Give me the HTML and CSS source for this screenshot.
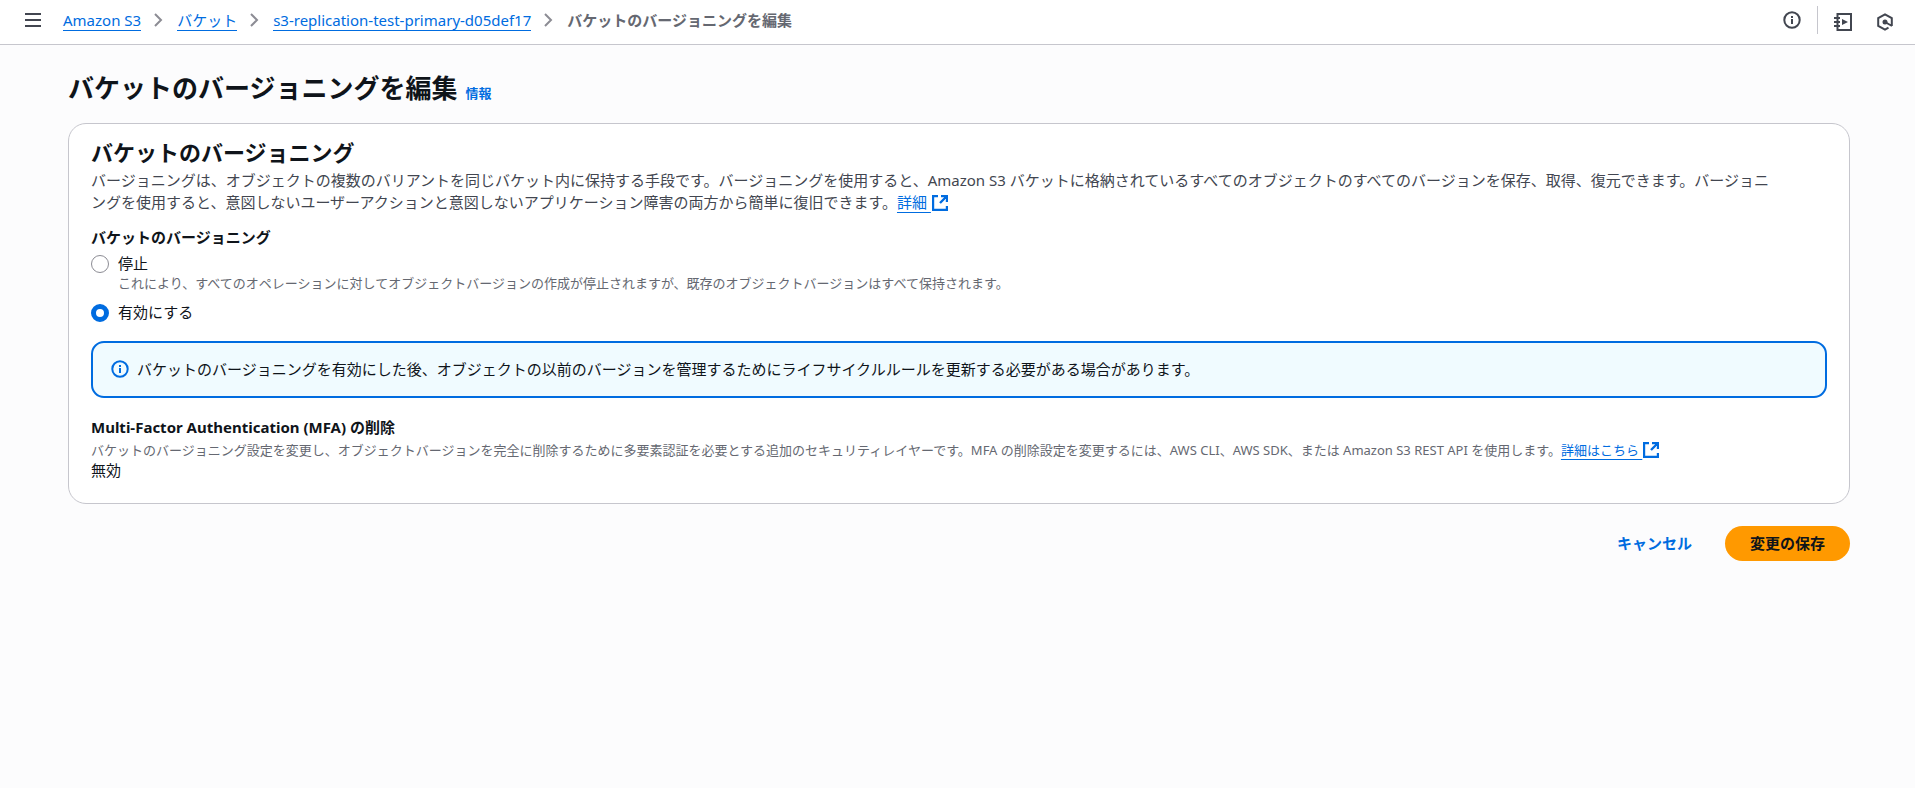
FILE: index.html
```
<!DOCTYPE html>
<html lang="ja">

<head>
  <meta charset="utf-8">
  <title>バケットのバージョニングを編集</title>
  <meta name="viewport" content="width=device-width, initial-scale=1">
  <link rel="stylesheet" href="styles.css">
</head>

<body>
  <header class="topbar">
    <button class="icon-button" aria-label="メニュー">
      <svg class="icon" viewBox="0 0 18 18"><path d="M1 3h16M1 9h16M1 15h16"/></svg>
    </button>
    <nav class="breadcrumbs">
      <a href="#">Amazon S3</a>
      <svg class="chevron" viewBox="0 0 10 16"><path d="M1 2l6 6-6 6"/></svg>
      <a href="#">バケット</a>
      <svg class="chevron" viewBox="0 0 10 16"><path d="M1 2l6 6-6 6"/></svg>
      <a href="#">s3-replication-test-primary-d05def17</a>
      <svg class="chevron" viewBox="0 0 10 16"><path d="M1 2l6 6-6 6"/></svg>
      <span class="current">バケットのバージョニングを編集</span>
    </nav>
    <div class="tools">
      <button class="icon-button" aria-label="情報">
        <svg class="icon" viewBox="0 0 18 18"><circle cx="9" cy="9" r="7.7"/><path d="M9 8v5M9 5v2"/></svg>
      </button>
      <span class="divider"></span>
      <button class="icon-button low" aria-label="チュートリアル">
        <svg class="icon" viewBox="0 0 18 18"><path d="M3.500 5V1H17v16H3.500v-4M3.500 6v2M3.500 10v2M0 5h6M0 9h6M0 13h6"/><path class="solid" d="M8 6l6 3-6 3z"/></svg>
      </button>
      <button class="icon-button low" aria-label="診断">
        <svg class="icon" viewBox="0 0 18 18"><path d="M15.800 12.900V5.100L9 1.300 2.200 5.100v7.800L9 16.700l3.500-2M9 9l7 4"/><circle class="solid" cx="9" cy="9" r="2.500"/></svg>
      </button>
    </div>
  </header>

  <main>
    <div class="title">
      <h1>バケットのバージョニングを編集</h1>
      <a class="info" href="#">情報</a>
    </div>

    <form>
      <section class="card">
        <h2>バケットのバージョニング</h2>
        <p class="intro">バージョニングは、オブジェクトの複数のバリアントを同じバケット内に保持する手段です。バージョニングを使用すると、Amazon S3 バケットに格納されているすべてのオブジェクトのすべてのバージョンを保存、取得、復元できます。バージョニングを使用すると、意図しないユーザーアクションと意図しないアプリケーション障害の両方から簡単に復旧できます。<a class="external" href="#">詳細&nbsp;<svg viewBox="0 0 16 16"><path d="M6 1H1v14h14v-4M9 1h6v6M15 1L8 8"/></svg></a></p>

        <fieldset>
          <legend>バケットのバージョニング</legend>
          <div class="option">
            <input type="radio" name="versioning" id="suspend" aria-describedby="suspend-hint">
            <div>
              <label for="suspend">停止</label>
              <p class="hint" id="suspend-hint">これにより、すべてのオペレーションに対してオブジェクトバージョンの作成が停止されますが、既存のオブジェクトバージョンはすべて保持されます。</p>
            </div>
          </div>
          <div class="option">
            <input type="radio" name="versioning" id="enable" checked>
            <label for="enable">有効にする</label>
          </div>
        </fieldset>

        <div class="alert">
          <svg class="icon" viewBox="0 0 18 18"><circle cx="9" cy="9" r="7.700"/><path d="M9 8v5M9 5v2"/></svg>
          <p>バケットのバージョニングを有効にした後、オブジェクトの以前のバージョンを管理するためにライフサイクルルールを更新する必要がある場合があります。</p>
        </div>

        <h3>Multi-Factor Authentication (MFA) の削除</h3>
        <p class="hint">バケットのバージョニング設定を変更し、オブジェクトバージョンを完全に削除するために多要素認証を必要とする追加のセキュリティレイヤーです。MFA の削除設定を変更するには、AWS CLI、AWS SDK、または Amazon S3 REST API を使用します。<a class="external" href="#">詳細はこちら&nbsp;<svg viewBox="0 0 16 16"><path d="M6 1H1v14h14v-4M9 1h6v6M15 1L8 8"/></svg></a></p>
        <p>無効</p>
      </section>

      <div class="actions">
        <button type="button" class="link">キャンセル</button>
        <button type="submit" class="primary">変更の保存</button>
      </div>
    </form>
  </main>
</body>

</html>
```
FILE: styles.css
```
* {
  box-sizing: border-box;
}
body {
  margin: 0;
  font-family: 'Noto Sans', 'Noto Sans CJK JP', sans-serif;
  font-size: 15px;
  line-height: 22px;
  background-color: #fcfcfd;
  color: #0f141a;
}
h1, h2, h3, p {
  margin: 0;
}
a {
  color: #006ce0;
}
button {
  font: inherit;
  border: none;
  background: none;
  cursor: pointer;
}
.topbar {
  display: flex;
  align-items: center;
  height: 45px;
  padding: 0 21px 4px 24px;
  background-color: white;
  border-bottom: 1px solid #c6c6cd;
}
.icon-button {
  display: flex;
  padding: 0;
  color: #424650;
}
.low {
  padding-top: 3px;
}
.icon {
  flex: none;
  width: 18px;
  height: 18px;
  fill: none;
  stroke: currentColor;
  stroke-width: 2;
}
.icon .solid {
  fill: currentColor;
  stroke: none;
}
.breadcrumbs {
  display: flex;
  align-items: center;
  gap: 13px;
  margin-left: 21px;
}
.breadcrumbs a {
  text-decoration: none;
  border-bottom: 1px solid #006ce0;
  line-height: 20px;
}
.chevron {
  width: 10px;
  height: 16px;
  fill: none;
  stroke: #8c8c94;
  stroke-width: 2;
}
.current {
  font-weight: 700;
  color: #656871;
}
.tools {
  display: flex;
  align-items: center;
  gap: 16px;
  margin-left: auto;
}
.tools .low + .low {
  margin-left: 8px;
}
.divider {
  width: 1px;
  height: 28px;
  background-color: #c6c6cd;
}
main {
  padding: 26px 65px 0 68px;
}
.title {
  display: flex;
  align-items: baseline;
  gap: 8px;
  margin-bottom: 18px;
}
h1 {
  font-size: 26px;
  line-height: 34px;
}
.info {
  font-size: 13px;
  font-weight: 700;
  text-decoration: none;
}
.card {
  padding: 14px 22px 22px;
  background-color: white;
  border: 1px solid #c6c6cd;
  border-radius: 18px;
}
h2 {
  margin-bottom: 3px;
  font-size: 22px;
  line-height: 28px;
}
.intro {
  padding-right: 46px;
  color: #424650;
}
.external {
  text-decoration: underline 1px;
  text-underline-offset: 4px;
}
.external svg {
  width: 16px;
  height: 16px;
  margin-left: 1px;
  vertical-align: -3px;
  fill: none;
  stroke: currentColor;
  stroke-width: 2.4;
}
fieldset {
  margin: 13px 0 0;
  padding: 0;
  border: none;
}
legend {
  padding: 0;
  font-weight: 700;
}
.option {
  display: flex;
  gap: 9px;
  margin-top: 4px;
}
.option + .option {
  margin-top: 9px;
}
input[type=radio] {
  appearance: none;
  flex: none;
  width: 18px;
  height: 18px;
  margin: 3px 0 0;
  border: 1px solid #8c8c94;
  border-radius: 50%;
  background-color: white;
}
input[type=radio]:checked {
  border: 5px solid #006ce0;
}
.hint {
  font-size: 13px;
  line-height: 18px;
  color: #656871;
}
.alert {
  display: flex;
  align-items: center;
  gap: 8px;
  margin: 18px 0;
  padding: 15px 18px 16px;
  border: 2px solid #006ce0;
  border-radius: 13px;
  background-color: #f0fbff;
}
.alert .icon {
  color: #006ce0;
}
h3 {
  margin-bottom: 3px;
  font-size: 15px;
  line-height: 22px;
}
.actions {
  display: flex;
  justify-content: flex-end;
  gap: 8px;
  margin-top: 22px;
}
.actions button {
  padding: 6px 25px 7px;
  border-radius: 18px;
  font-weight: 700;
}
.actions .link {
  color: #006ce0;
}
.actions .primary {
  background-color: #ff9900;
  color: #0f141a;
}
```
